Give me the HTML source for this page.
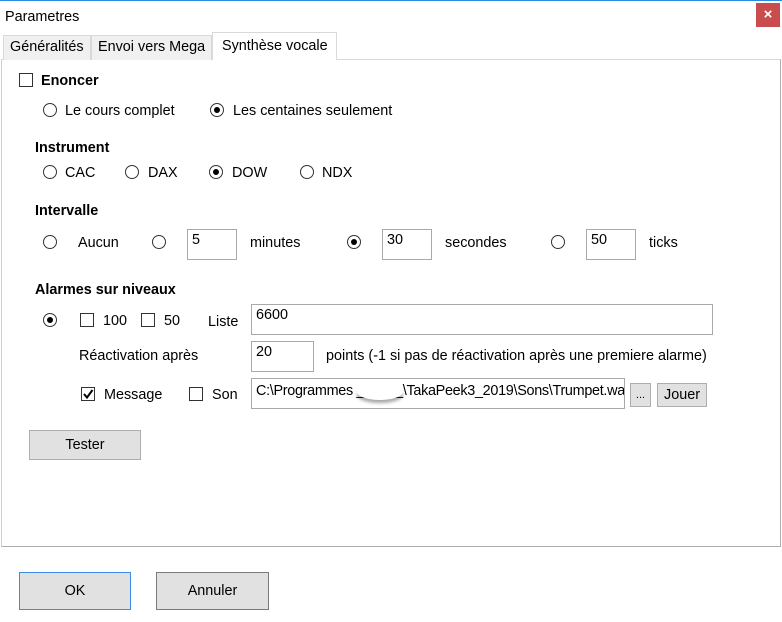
<!DOCTYPE html>
<html><head><meta charset="utf-8"><style>
*{margin:0;padding:0;box-sizing:border-box}
body{width:782px;height:622px;background:#fff;position:relative;overflow:hidden;font-family:"Segoe UI","Liberation Sans",sans-serif;font-size:14.4px;color:#000}
.a{position:absolute;white-space:nowrap;line-height:18px}
.b{font-weight:bold}
.r{position:absolute;width:14px;height:14px;border:1px solid #333;border-radius:50%;background:#fff}
.r.on::after{content:"";position:absolute;left:3px;top:3px;width:6px;height:6px;border-radius:50%;background:#000}
.c{position:absolute;width:14px;height:14px;border:1px solid #333;background:#fff}
.i{position:absolute;border:1px solid #a9a9a9;background:#fff;padding:1px 4px;line-height:18px;white-space:nowrap;overflow:hidden}
.btn{position:absolute;background:#e1e1e1;border:1px solid #adadad;text-align:center}
.tab{position:absolute;top:35px;height:25px;background:#f0f0f0;border:1px solid #d9d9d9;border-bottom:none;line-height:22px;padding-left:6px}
</style></head><body>
<div style="position:absolute;left:0;top:0;width:782px;height:1px;background:#2b8ae6"></div>
<div class="a" style="left:5px;top:8px">Parametres</div>
<div style="position:absolute;left:756px;top:3px;width:24px;height:24px;background:#c94d4d;color:#fff;text-align:center;line-height:23px;font-size:15px;font-weight:bold">×</div>

<div style="position:absolute;left:1px;top:59px;width:780px;height:488px;border:1px solid #adadad;border-top-color:#d9d9d9;border-left-color:#d0d0d0"></div>
<div class="tab" style="left:3px;width:88px">Généralités</div>
<div class="tab" style="left:91px;width:121px">Envoi vers Mega</div>
<div class="tab" style="left:212px;top:32px;height:28px;width:125px;background:#fff;line-height:26px;padding-left:9px">Synthèse vocale</div>

<div class="c" style="left:19px;top:73px"></div>
<div class="a b" style="left:41px;top:72px">Enoncer</div>
<div class="r" style="left:43px;top:103px"></div><div class="a" style="left:65px;top:102px">Le cours complet</div>
<div class="r on" style="left:210px;top:103px"></div><div class="a" style="left:233px;top:102px">Les centaines seulement</div>

<div class="a b" style="left:35px;top:139px">Instrument</div>
<div class="r" style="left:43px;top:165px"></div><div class="a" style="left:65px;top:164px">CAC</div>
<div class="r" style="left:125px;top:165px"></div><div class="a" style="left:148px;top:164px">DAX</div>
<div class="r on" style="left:209px;top:165px"></div><div class="a" style="left:232px;top:164px">DOW</div>
<div class="r" style="left:300px;top:165px"></div><div class="a" style="left:322px;top:164px">NDX</div>

<div class="a b" style="left:35px;top:202px">Intervalle</div>
<div class="r" style="left:43px;top:235px"></div><div class="a" style="left:78px;top:234px">Aucun</div>
<div class="r" style="left:152px;top:235px"></div>
<div class="i" style="left:187px;top:229px;width:50px;height:31px">5</div>
<div class="a" style="left:250px;top:234px">minutes</div>
<div class="r on" style="left:347px;top:235px"></div>
<div class="i" style="left:382px;top:229px;width:50px;height:31px">30</div>
<div class="a" style="left:445px;top:234px">secondes</div>
<div class="r" style="left:551px;top:235px"></div>
<div class="i" style="left:586px;top:229px;width:50px;height:31px">50</div>
<div class="a" style="left:649px;top:234px">ticks</div>

<div class="a b" style="left:35px;top:281px">Alarmes sur niveaux</div>
<div class="r on" style="left:43px;top:313px"></div>
<div class="c" style="left:80px;top:313px"></div><div class="a" style="left:103px;top:312px">100</div>
<div class="c" style="left:141px;top:313px"></div><div class="a" style="left:164px;top:312px">50</div>
<div class="a" style="left:208px;top:313px">Liste</div>
<div class="i" style="left:251px;top:304px;width:462px;height:31px">6600</div>

<div class="a" style="left:79px;top:347px">Réactivation après</div>
<div class="i" style="left:251px;top:341px;width:63px;height:31px">20</div>
<div class="a" style="left:326px;top:347px">points (-1 si pas de réactivation après une premiere alarme)</div>

<div class="c" style="left:81px;top:387px"><svg width="12" height="12" style="position:absolute;left:0;top:0"><path d="M2 6 L5 9.5 L10.5 2" stroke="#000" stroke-width="2" fill="none"/></svg></div>
<div class="a" style="left:104px;top:386px">Message</div>
<div class="c" style="left:189px;top:387px"></div><div class="a" style="left:212px;top:386px">Son</div>
<div class="i" style="left:251px;top:378px;width:374px;height:31px;padding:3px 2px 0 4px;letter-spacing:-0.3px">C:\Programmes ______\TakaPeek3_2019\Sons\Trumpet.wav</div>
<div style="position:absolute;left:357px;top:384px;width:46px;height:16px;background:#fff;border-radius:50%;box-shadow:0 3px 3px rgba(0,0,0,.35)"></div>
<div class="btn" style="left:630px;top:383px;width:21px;height:24px;line-height:22px;font-size:11px">...</div>
<div class="btn" style="left:657px;top:383px;width:50px;height:24px;line-height:22px">Jouer</div>

<div class="btn" style="left:29px;top:430px;width:112px;height:30px;line-height:28px">Tester</div>

<div class="btn" style="left:19px;top:572px;width:112px;height:38px;line-height:36px;border-color:#3c8de6">OK</div>
<div class="btn" style="left:156px;top:572px;width:113px;height:38px;line-height:36px;border-color:#7a7a7a">Annuler</div>
</body></html>
